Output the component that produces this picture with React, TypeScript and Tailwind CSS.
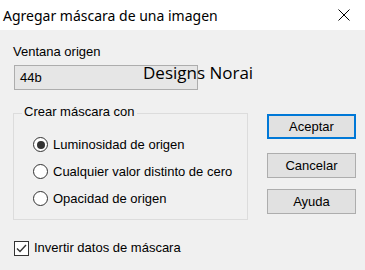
import React from "react";

function Radio({ checked, label }: { checked?: boolean; label: string }) {
  return (
    <div className="flex items-center h-[27px]">
      <span className="w-[15px] h-[15px] rounded-full border border-[#333333] bg-white flex items-center justify-center">
        {checked && <span className="w-[8px] h-[8px] rounded-full bg-[#333333]" />}
      </span>
      <span className="ml-[5px] text-[13px] text-black">{label}</span>
    </div>
  );
}

function Btn({ label, primary }: { label: string; primary?: boolean }) {
  return (
    <div
      className={
        primary
          ? "w-[89px] h-[25px] border-2 border-[#0078d7] bg-[#e1e1e1] flex items-center justify-center text-[13px] text-black"
          : "w-[89px] h-[25px] border border-[#adadad] bg-[#e1e1e1] flex items-center justify-center text-[13px] text-black"
      }
    >
      {label}
    </div>
  );
}

export default function App() {
  return (
    <div
      className="w-[365px] h-[270px] bg-[#f0f0f0] overflow-hidden relative"
      style={{ fontFamily: '"Liberation Sans", Arial, sans-serif' }}
    >
      <div className="h-[30px] bg-white flex items-center justify-between pl-[3px] pr-[15px]">
        <span
          className="text-[14px] text-black"
          style={{ fontFamily: '"Noto Sans", "Open Sans", sans-serif' }}
        >
          Agregar máscara de una imagen
        </span>
        <svg width="12" height="12" viewBox="0 0 12 12">
          <path d="M0.5 0.5 L11.5 11.5 M11.5 0.5 L0.5 11.5" stroke="#000" strokeWidth="1" />
        </svg>
      </div>
      <div className="flex pl-[13px]">
        <div className="w-[235px] flex flex-col">
          <div className="mt-[14px] h-[16px] leading-[16px] text-[13px] text-black">Ventana origen</div>
          <div className="mt-[5px] ml-[1px] w-[184px] h-[25px] border border-[#adadad] bg-[#e6e6e6] flex items-center pl-[5px] text-[13px] text-black">
            44b
          </div>
          <div className="mt-[23px] h-[107px] border border-[#dcdcdc] flex flex-col">
            <div className="-mt-[10px] ml-[8px] self-start px-[2px] bg-[#f0f0f0] text-[13px] leading-[16px] text-black">
              Crear máscara con
            </div>
            <div className="mt-[11px] ml-[19px] flex flex-col">
              <Radio checked label="Luminosidad de origen" />
              <Radio label="Cualquier valor distinto de cero" />
              <Radio label="Opacidad de origen" />
            </div>
          </div>
          <div className="mt-[20px] ml-[1px] flex items-center h-[16px]">
            <span className="w-[15px] h-[15px] border border-[#333333] bg-white flex items-center justify-center">
              <svg width="11" height="9" viewBox="0 0 11 9">
                <path d="M1 4.5 L4 7.5 L10 1" fill="none" stroke="#333" strokeWidth="1.4" />
              </svg>
            </span>
            <span className="ml-[5px] text-[13px] text-black">Invertir datos de máscara</span>
          </div>
        </div>
        <div className="ml-[19px] flex flex-col pt-[84px]">
          <Btn primary label="Aceptar" />
          <div className="mt-[14px]">
            <Btn label="Cancelar" />
          </div>
          <div className="mt-[11px]">
            <Btn label="Ayuda" />
          </div>
        </div>
      </div>
      <div
        className="absolute left-[143px] top-[61px] text-[17px] leading-[24px] text-black"
        style={{ fontFamily: '"Open Sans", "Noto Sans", sans-serif' }}
      >
        Designs Norai
      </div>
    </div>
  );
}
